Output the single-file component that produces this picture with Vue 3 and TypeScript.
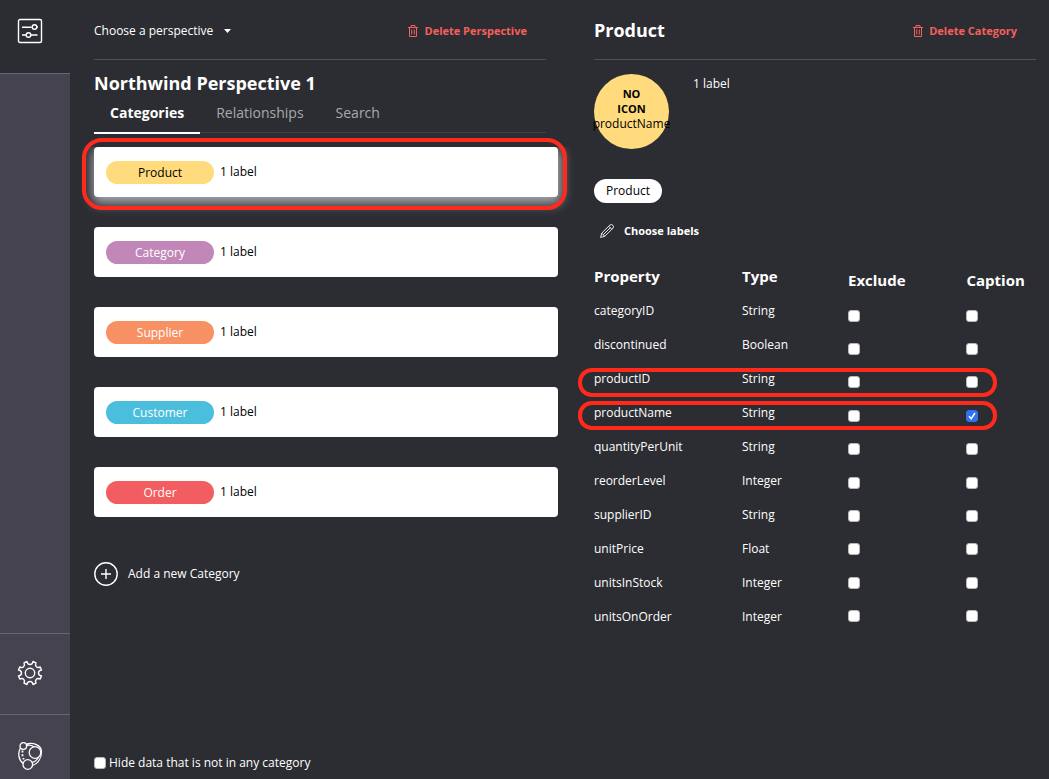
<script setup lang="ts">
import { ref } from 'vue'

interface Category {
  name: string
  background: string
  color: string
}

interface Property {
  name: string
  type: string
  exclude: boolean
  caption: boolean
}

const categories: Category[] = [
  { name: 'Product', background: '#ffdb7d', color: '#000000' },
  { name: 'Category', background: '#c287b9', color: '#ffffff' },
  { name: 'Supplier', background: '#f79163', color: '#ffffff' },
  { name: 'Customer', background: '#4cbedd', color: '#ffffff' },
  { name: 'Order', background: '#f15d60', color: '#ffffff' },
]

const tabs = ['Categories', 'Relationships', 'Search']
const activeTab = ref('Categories')
const selected = ref('Product')
const hideUncategorised = ref(false)

const properties = ref<Property[]>(
  [
    ['categoryID', 'String'],
    ['discontinued', 'Boolean'],
    ['productID', 'String'],
    ['productName', 'String'],
    ['quantityPerUnit', 'String'],
    ['reorderLevel', 'Integer'],
    ['supplierID', 'String'],
    ['unitPrice', 'Float'],
    ['unitsInStock', 'Integer'],
    ['unitsOnOrder', 'Integer'],
  ].map(([name, type]) => ({ name, type, exclude: false, caption: name === 'productName' })),
)
</script>

<template>
  <div class="app">
    <nav class="sidebar" aria-label="Main">
      <button class="side-item side-top" type="button" aria-label="Perspectives">
        <svg width="26" height="26" viewBox="0 0 26 26" fill="none" stroke="#fff" stroke-width="1.4">
          <rect x="1.5" y="1.5" width="23" height="23" rx="1.5" />
          <path d="M5 9.2h9.6M5 17h4M14 17h6.5" />
          <circle cx="17.500" cy="9" r="2.3" />
          <path d="M19.800 9h1.2" />
          <circle cx="11.5" cy="17" r="2.3" />
        </svg>
      </button>
      <div class="side-space"></div>
      <button class="side-item side-settings" type="button" aria-label="Settings">
        <svg width="26" height="26" viewBox="0 0 26 26" fill="none" stroke="#fff" stroke-width="1.4" stroke-linejoin="round">
          <path d="M10 1.500C10.500 5.500 15.500 5.500 16 1.500L19 2.800C17.500 6 20 8.500 23.200 7L24.500 10C20.500 10.500 20.500 15.500 24.500 16L23.200 19C20 17.500 17.500 20 19 23.200L16 24.500C15.500 20.500 10.500 20.500 10 24.500L7 23.200C8.500 20 6 17.500 2.800 19L1.500 16C5.500 15.500 5.500 10.500 1.500 10L2.800 7C6 8.500 8.500 6 7 2.800Z" />
          <circle cx="13" cy="13" r="4.700" />
        </svg>
      </button>
      <button class="side-item side-last" type="button" aria-label="About">
        <svg width="26" height="30" viewBox="0 0 26 30" fill="none" stroke="#fff" stroke-width="1.300">
          <circle cx="6.300" cy="5" r="3.300" />
          <circle cx="18" cy="11.500" r="5.800" />
          <circle cx="10.800" cy="23.500" r="4.800" />
          <path d="M9.300 3.200C16 1 24.300 4 24.500 10.500C24.500 17 21 22.500 15.600 24.500M9.500 4.500Q13.500 3.500 17 5.800M3.400 7C.7 12 1.200 18.500 6.200 22.500M21.500 16Q19.500 20.500 15 21.500" />
          <path d="M5.500 9.500v2M5.500 13.200v2M6.500 17v1.600" stroke-width="1.800" />
        </svg>
      </button>
    </nav>

    <main class="content">
      <section class="perspective">
        <header class="bar bar-inset">
          <button class="plain chooser" type="button">
            Choose a perspective
            <svg width="7" height="4" viewBox="0 0 7 4" fill="#fff" aria-hidden="true"><path d="M0 0h7L3.500 4z" /></svg>
          </button>
          <button class="plain delete" type="button">
            <svg width="10" height="12" viewBox="0 0 10 12" fill="none" stroke="currentColor" aria-hidden="true">
              <path d="M0 2.500h10M3 2V.5h4V2M1.500 3v8.500h7V3M3.700 4.500v5M6.300 4.500v5" />
            </svg>
            Delete Perspective
          </button>
        </header>

        <h1 class="title">Northwind Perspective 1</h1>

        <div class="tabs bar-inset" role="tablist">
          <button
            v-for="tab in tabs"
            :key="tab"
            class="tab"
            :class="{ active: tab === activeTab }"
            type="button"
            role="tab"
            :aria-selected="tab === activeTab"
            @click="activeTab = tab"
          >{{ tab }}</button>
        </div>

        <ul class="categories">
          <li v-for="c in categories" :key="c.name" class="category">
            <button class="card" :class="{ selected: c.name === selected }" type="button" @click="selected = c.name">
              <span class="pill" :style="{ background: c.background, color: c.color }">{{ c.name }}</span>
              <span>1 label</span>
            </button>
            <span v-if="c.name === selected" class="ring card-ring"></span>
          </li>
        </ul>

        <button class="plain add" type="button">
          <svg width="24" height="24" viewBox="0 0 24 24" fill="none" stroke="#fff" stroke-width="1.400" aria-hidden="true">
            <circle cx="12" cy="12" r="11.200" />
            <path d="M7 12h10M12 7v10" />
          </svg>
          Add a new Category
        </button>

        <label class="hide">
          <input v-model="hideUncategorised" class="check" type="checkbox" />
          Hide data that is not in any category
        </label>
      </section>

      <section class="details">
        <header class="bar">
          <h2 class="title">Product</h2>
          <button class="plain delete" type="button">
            <svg width="10" height="12" viewBox="0 0 10 12" fill="none" stroke="currentColor" aria-hidden="true">
              <path d="M0 2.500h10M3 2V.5h4V2M1.500 3v8.500h7V3M3.700 4.500v5M6.300 4.500v5" />
            </svg>
            Delete Category
          </button>
        </header>

        <div class="summary">
          <div class="node">
            <strong>NO</strong>
            <strong>ICON</strong>
            <span>productName</span>
          </div>
          <span class="count">1 label</span>
        </div>

        <span class="label-chip">Product</span>

        <button class="plain choose" type="button">
          <svg width="14" height="14" viewBox="0 0 14 14" fill="none" stroke="#fff" stroke-width="0.900" stroke-linejoin="round" aria-hidden="true">
            <path d="M.6 13.400L1.700 9.200L9.900 1Q11.400 -.1 12.800 1.200Q14.100 2.600 13 4.100L4.800 12.300ZM1.700 9.200L4.800 12.300M8.700 2.200L11.800 5.300M3.200 10.800L10.300 3.700" />
          </svg>
          Choose labels
        </button>

        <div class="properties">
          <table class="names">
            <thead>
              <tr><th scope="col">Property</th><th scope="col">Type</th></tr>
            </thead>
            <tbody>
              <tr v-for="p in properties" :key="p.name">
                <td>{{ p.name }}</td>
                <td>{{ p.type }}</td>
              </tr>
            </tbody>
          </table>
          <table class="flags">
            <thead>
              <tr><th scope="col">Exclude</th><th scope="col">Caption</th></tr>
            </thead>
            <tbody>
              <tr v-for="p in properties" :key="p.name">
                <td><input v-model="p.exclude" class="check" type="checkbox" :aria-label="`Exclude ${p.name}`" /></td>
                <td><input v-model="p.caption" class="check" type="checkbox" :aria-label="`Use ${p.name} as caption`" /></td>
              </tr>
            </tbody>
          </table>
          <span class="ring row-ring ring-id"></span>
          <span class="ring row-ring ring-name"></span>
        </div>
      </section>
    </main>
  </div>
</template>

<style>
body {
  margin: 0;
  background: #2c2d32;
}
</style>

<style scoped>
* {
  box-sizing: border-box;
}

.app {
  display: flex;
  min-height: 100vh;
  background: #2c2d32;
  color: #fff;
  font: 12px/16px 'Open Sans', 'Noto Sans', sans-serif;
}

button {
  font: inherit;
  color: inherit;
  border: 0;
  margin: 0;
  padding: 0;
  background: none;
  cursor: pointer;
}

svg {
  flex: none;
  display: block;
}

.sidebar {
  flex: none;
  width: 70px;
  display: flex;
  flex-direction: column;
  background: #464350;
}

.side-item {
  height: 81px;
  padding-left: 17px;
  border-top: 1px solid #636674;
}

.side-top {
  height: 74px;
  padding-bottom: 11px;
  border-top: 0;
  border-bottom: 1px solid #636674;
  background: #2c2d32;
}

.side-settings {
  padding-bottom: 2px;
}

.side-space {
  flex: 1;
}

.side-last {
  height: 65px;
  padding-top: 18px;
}

.content {
  flex: 1;
  display: grid;
  grid-template-columns: 464fr 442fr;
  column-gap: 36px;
  padding: 0 13px 0 24px;
}

.perspective,
.details {
  display: flex;
  flex-direction: column;
  align-items: stretch;
  min-width: 0;
}

.bar {
  display: flex;
  align-items: center;
  justify-content: space-between;
  height: 60px;
  padding-right: 19px;
  border-bottom: 1px solid #505156;
}

.bar-inset {
  margin-right: 12px;
}

.plain {
  display: flex;
  align-items: center;
  text-align: left;
}

.bar .plain {
  padding-top: 2px;
}

.chooser {
  gap: 11px;
}

.delete {
  gap: 6px;
  color: #f5605c;
  font-size: 11px;
  font-weight: 700;
}

.title {
  margin: 0;
  font-size: 18px;
  line-height: 24px;
  font-weight: 700;
}

.perspective > .title {
  margin-top: 11px;
}

.tabs {
  display: flex;
  height: 38px;
  border-bottom: 1px solid #414247;
}

.tab {
  height: 39px;
  padding: 0 16px 1px;
  border-bottom: 2px solid transparent;
  font-size: 14px;
  color: #a9a9ac;
}

.tab.active {
  border-bottom-color: #fff;
  color: #fff;
  font-weight: 700;
}

.categories {
  display: flex;
  flex-direction: column;
  gap: 30px;
  margin: 14px 0 0;
  padding: 0;
  list-style: none;
}

.category {
  position: relative;
}

.card {
  display: flex;
  align-items: center;
  gap: 6px;
  width: 100%;
  height: 50px;
  padding: 0 12px;
  border-radius: 4px;
  background: #fff;
  color: #000;
}

.card.selected {
  box-shadow: 1px 4px 12px 3px #a4a5ac;
  clip-path: inset(0 -30px -30px -30px);
}

.pill {
  width: 108px;
  border-radius: 12px;
  line-height: 23px;
  text-align: center;
}

.ring {
  position: absolute;
  border: 4px solid #ff2a1c;
  pointer-events: none;
}

.card-ring {
  inset: -9px -9px -13px -12px;
  border-radius: 20px;
}

.add {
  align-self: flex-start;
  gap: 10px;
  margin-top: 45px;
}

.hide {
  display: flex;
  align-items: center;
  align-self: flex-start;
  gap: 3px;
  margin-top: auto;
  padding-bottom: 8px;
}

.check {
  appearance: none;
  display: block;
  width: 12px;
  height: 12px;
  margin: 0;
  border: 1px solid #b8b8ba;
  border-radius: 3px;
  background: #fff;
}

.check:checked {
  border-color: #2f73f3;
  background: #2f73f3 url("data:image/svg+xml,%3Csvg xmlns='http://www.w3.org/2000/svg' viewBox='0 0 10 10' fill='none' stroke='white' stroke-width='1.5'%3E%3Cpath d='M2 5.300L4.200 7.700L8 2'/%3E%3C/svg%3E") center / 10px 10px no-repeat;
}

.summary {
  display: flex;
  gap: 24px;
  margin-top: 14px;
}

.node {
  display: flex;
  flex-direction: column;
  align-items: center;
  width: 75px;
  height: 75px;
  padding-top: 12px;
  border-radius: 50%;
  background: #ffdb7d;
  color: #000;
}

.node strong {
  font-size: 11px;
  line-height: 15px;
}

.count {
  margin-top: 2px;
}

.label-chip {
  align-self: flex-start;
  margin-top: 30px;
  padding: 0 12px;
  border-radius: 12px;
  background: #fff;
  color: #000;
  line-height: 24px;
}

.choose {
  align-self: flex-start;
  gap: 10px;
  margin: 20px 0 0 6px;
  font-size: 11px;
  font-weight: 700;
}

.properties {
  position: relative;
  display: grid;
  grid-template-columns: 254fr 188fr;
  align-items: start;
  margin-top: 24px;
}

table {
  width: 100%;
  table-layout: fixed;
  border-collapse: collapse;
}

th,
td {
  padding: 0;
  text-align: left;
}

th {
  font-size: 15px;
}

.names th {
  height: 31px;
  padding-bottom: 5px;
}

.names th:first-child {
  width: 148px;
}

.names td {
  height: 34px;
}

.flags {
  height: 370px;
}

.flags th {
  height: 36px;
  padding-bottom: 3px;
}

.flags th:first-child {
  width: 63%;
}

.row-ring {
  left: -16px;
  right: 39px;
  height: 29px;
  border-radius: 14px;
}

.ring-id {
  top: 105px;
}

.ring-name {
  top: 138px;
}
</style>
